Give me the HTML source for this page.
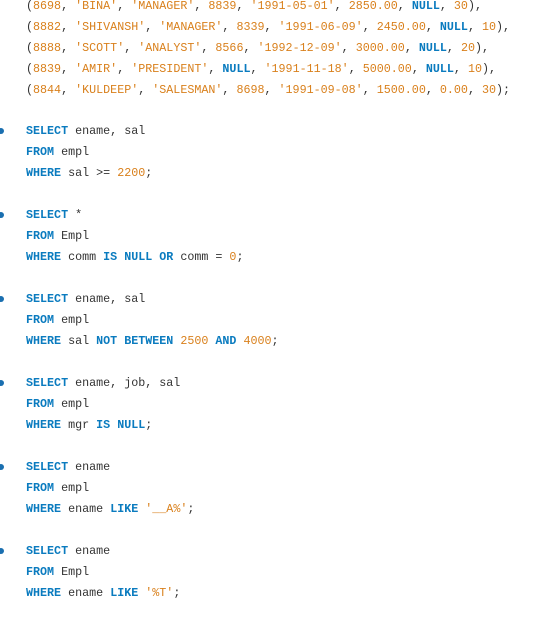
<!DOCTYPE html>
<html><head><style>
body{margin:0;background:#fff;width:538px;height:626px;overflow:hidden;position:relative;font-family:"Liberation Mono",monospace;font-size:11.7px;color:#333}
.l{position:absolute;left:26px;white-space:pre;line-height:14px}
.k{color:#0a7bbf;font-weight:bold}
.s{color:#d9801c}
.b{position:absolute;left:-2px;width:6px;height:6px;border-radius:50%;background:#1a6fb0}
</style></head><body>
<div class="l" style="top:-1px">(<span class="s">8698</span>, <span class="s">'BINA'</span>, <span class="s">'MANAGER'</span>, <span class="s">8839</span>, <span class="s">'1991-05-01'</span>, <span class="s">2850.00</span>, <span class="k">NULL</span>, <span class="s">30</span>),</div>
<div class="l" style="top:20px">(<span class="s">8882</span>, <span class="s">'SHIVANSH'</span>, <span class="s">'MANAGER'</span>, <span class="s">8339</span>, <span class="s">'1991-06-09'</span>, <span class="s">2450.00</span>, <span class="k">NULL</span>, <span class="s">10</span>),</div>
<div class="l" style="top:41px">(<span class="s">8888</span>, <span class="s">'SCOTT'</span>, <span class="s">'ANALYST'</span>, <span class="s">8566</span>, <span class="s">'1992-12-09'</span>, <span class="s">3000.00</span>, <span class="k">NULL</span>, <span class="s">20</span>),</div>
<div class="l" style="top:62px">(<span class="s">8839</span>, <span class="s">'AMIR'</span>, <span class="s">'PRESIDENT'</span>, <span class="k">NULL</span>, <span class="s">'1991-11-18'</span>, <span class="s">5000.00</span>, <span class="k">NULL</span>, <span class="s">10</span>),</div>
<div class="l" style="top:83px">(<span class="s">8844</span>, <span class="s">'KULDEEP'</span>, <span class="s">'SALESMAN'</span>, <span class="s">8698</span>, <span class="s">'1991-09-08'</span>, <span class="s">1500.00</span>, <span class="s">0.00</span>, <span class="s">30</span>);</div>

<div class="b" style="top:128px"></div>
<div class="l" style="top:124px"><span class="k">SELECT</span> ename, sal</div>
<div class="l" style="top:145px"><span class="k">FROM</span> empl</div>
<div class="l" style="top:166px"><span class="k">WHERE</span> sal &gt;= <span class="s">2200</span>;</div>

<div class="b" style="top:212px"></div>
<div class="l" style="top:208px"><span class="k">SELECT</span> *</div>
<div class="l" style="top:229px"><span class="k">FROM</span> Empl</div>
<div class="l" style="top:250px"><span class="k">WHERE</span> comm <span class="k">IS NULL OR</span> comm = <span class="s">0</span>;</div>

<div class="b" style="top:296px"></div>
<div class="l" style="top:292px"><span class="k">SELECT</span> ename, sal</div>
<div class="l" style="top:313px"><span class="k">FROM</span> empl</div>
<div class="l" style="top:334px"><span class="k">WHERE</span> sal <span class="k">NOT BETWEEN</span> <span class="s">2500</span> <span class="k">AND</span> <span class="s">4000</span>;</div>

<div class="b" style="top:380px"></div>
<div class="l" style="top:376px"><span class="k">SELECT</span> ename, job, sal</div>
<div class="l" style="top:397px"><span class="k">FROM</span> empl</div>
<div class="l" style="top:418px"><span class="k">WHERE</span> mgr <span class="k">IS NULL</span>;</div>

<div class="b" style="top:464px"></div>
<div class="l" style="top:460px"><span class="k">SELECT</span> ename</div>
<div class="l" style="top:481px"><span class="k">FROM</span> empl</div>
<div class="l" style="top:502px"><span class="k">WHERE</span> ename <span class="k">LIKE</span> <span class="s">'__A%'</span>;</div>

<div class="b" style="top:548px"></div>
<div class="l" style="top:544px"><span class="k">SELECT</span> ename</div>
<div class="l" style="top:565px"><span class="k">FROM</span> Empl</div>
<div class="l" style="top:586px"><span class="k">WHERE</span> ename <span class="k">LIKE</span> <span class="s">'%T'</span>;</div>
</body></html>
